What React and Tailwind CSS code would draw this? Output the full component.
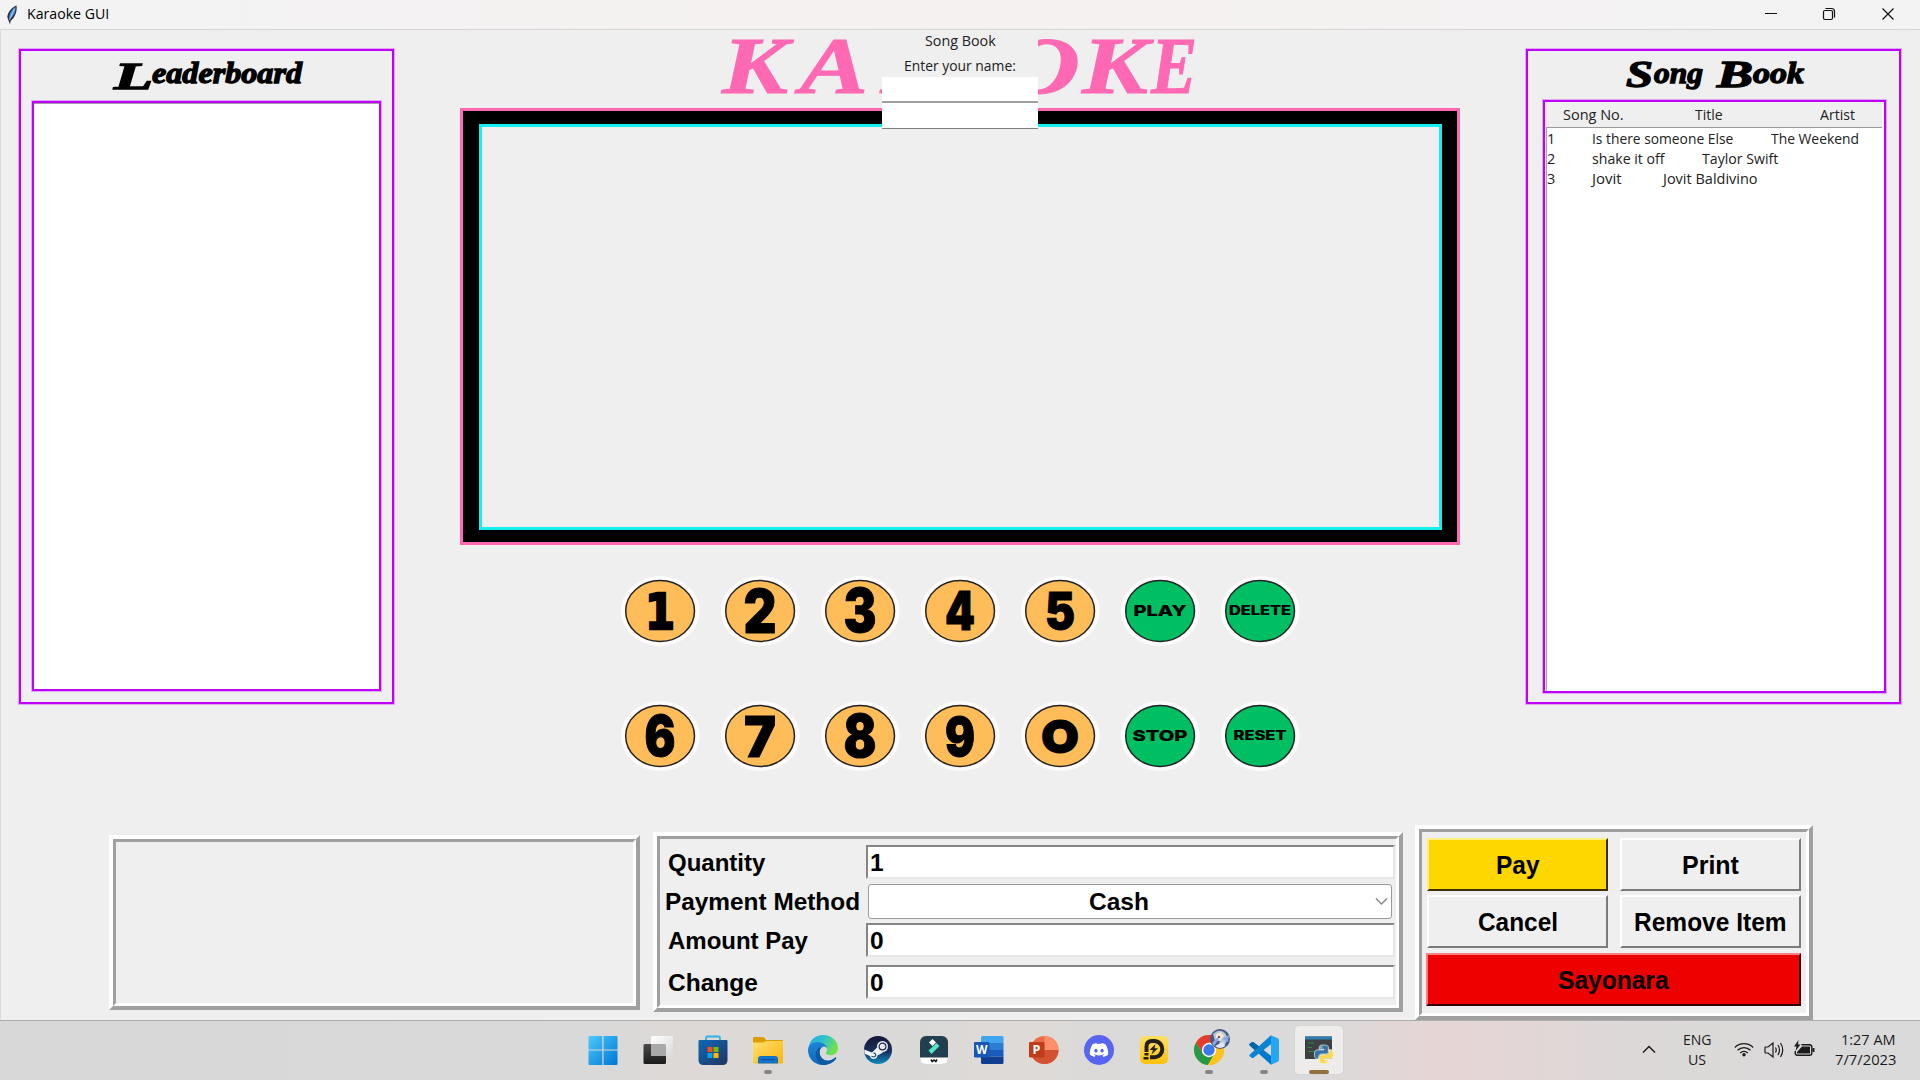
import React, { useLayoutEffect, useRef, useState } from "react";
import { FaDiscord } from "react-icons/fa";

const UI = "font-['Open_Sans','Noto_Sans',sans-serif]";
const ARIAL = "font-['Liberation_Sans',Arial,sans-serif]";

/* One line of text, condensed or widened to an exact width. */
function Fit({ w, className = "", children }) {
  const ref = useRef(null);
  const [scale, setScale] = useState(1);
  useLayoutEffect(() => {
    if (ref.current) setScale(w / ref.current.offsetWidth);
  }, [w]);
  return (
    <span className={"block whitespace-pre " + className} style={{ width: w }}>
      <span ref={ref} className="inline-block origin-left" style={{ transform: `scaleX(${scale})` }}>
        {children}
      </span>
    </span>
  );
}

function TitleBar() {
  return (
    <header className="flex h-[30px] items-center border-b border-[#d4d4d4] bg-gradient-to-r from-[#f3f3f3] via-[#f5f1f0] to-[#f3f3f3] pl-[6px]">
      <svg width="12" height="20" viewBox="0 0 12 20">
        <path d="M10.500.5C7 1.500 2 6 1.300 12l1.200 3.500L4 19.500 4.600 16C9 12.500 11.500 6 10.500.5Z" fill="#26303f" />
        <path d="M9.500 1.800C6.500 4 3.200 8 3 13l1.200.8C7.800 11 10 6.500 9.500 1.800Z" fill="#4f8fd6" />
        <path d="M8.500 3.500 3.500 15" stroke="#bcd8f5" strokeWidth=".8" />
      </svg>
      <Fit w={82} className={`${UI} ml-[9px] pb-[2px] text-[15px] leading-[27px] text-black`}>Karaoke GUI</Fit>
      <div className="ml-auto flex items-center">
        <svg width="58" height="29" viewBox="0 0 58 29"><path d="M22 13.500H34" stroke="#111" /></svg>
        <svg width="58" height="29" viewBox="0 0 58 29" fill="none" stroke="#111" strokeWidth="1.200">
          <rect x="22.500" y="10.500" width="9" height="9" rx="1.500" />
          <path d="M24.500 8.500H30.500Q33.500 8.500 33.500 11.500V17.500" />
        </svg>
        <svg width="61" height="29" viewBox="0 0 61 29"><path d="M23.500 8.500l11 11M34.500 8.500l-11 11" stroke="#111" strokeWidth="1.200" /></svg>
      </div>
    </header>
  );
}

const purple = "border-2 border-[#bf00ff] shadow-[0_0_0_1px_rgba(191,0,255,0.3)]";

function Leaderboard() {
  return (
    <section className={`ml-[19px] mt-[19px] h-[655px] w-[375px] ${purple} flex flex-col px-[11px]`}>
      <svg width="350" height="50" viewBox="32 51 350 50" className="shrink-0 font-['Liberation_Serif',serif] font-bold">
        <text y="83" fontSize="31" stroke="#000" strokeWidth="1.300">
          <tspan x="114" dy="6" fontSize="38" fontStyle="italic" textLength="39" lengthAdjust="spacingAndGlyphs">L</tspan>
          <tspan x="152" dy="-6" fontSize="30" fontStyle="italic" textLength="150" lengthAdjust="spacingAndGlyphs">eaderboard</tspan>
        </text>
      </svg>
      <div className={`h-[590px] w-[349px] ${purple} bg-white`}><div className="h-px bg-[#a0a0a0]" /></div>
    </section>
  );
}

const songs = [
  { no: "1", title: "Is there someone Else", tw: 141, gap: "ml-[38px]", artist: "The Weekend", aw: 88 },
  { no: "2", title: "shake it off", tw: 72, gap: "ml-[38px]", artist: "Taylor Swift", aw: 76 },
  { no: "3", title: "Jovit", tw: 30, gap: "ml-[41px]", artist: "Jovit Baldivino", aw: 95 },
];

function SongBook() {
  return (
    <section className={`ml-[66px] mt-[19px] h-[655px] w-[375px] ${purple} flex flex-col pl-[15px]`}>
      <svg width="344" height="49" viewBox="1543 51 344 49" className="shrink-0 font-['Liberation_Serif',serif] font-bold italic">
        <text y="83" fontSize="30" stroke="#000" strokeWidth="1.300">
          <tspan x="1626" dy="4" fontSize="37" textLength="27" lengthAdjust="spacingAndGlyphs">S</tspan>
          <tspan x="1654" dy="-4" textLength="49" lengthAdjust="spacingAndGlyphs">ong</tspan>
          <tspan> </tspan>
          <tspan x="1717" dy="4" fontSize="37" textLength="36" lengthAdjust="spacingAndGlyphs">B</tspan>
          <tspan x="1753" dy="-4" textLength="51" lengthAdjust="spacingAndGlyphs">ook</tspan>
        </text>
      </svg>
      <div className={`h-[593px] w-[343px] ${purple} ${UI} bg-white pl-[1px] text-[14.500px] leading-[20px] text-[#222]`}>
        <div className="mr-[2px] flex h-[26px] items-center border-b border-[#9a9a9a] bg-[#efefef] pl-[17px]">
          <Fit w={61}>Song No.</Fit>
          <Fit w={28} className="ml-[71px]">Title</Fit>
          <Fit w={35} className="ml-[97px]">Artist</Fit>
        </div>
        <ul className="h-[563px] border-l border-[#a8a8a8] pt-[1px]">
          {songs.map((s) => (
            <li key={s.no} className="flex h-[20px]">
              <Fit w={8}>{s.no}</Fit>
              <Fit w={s.tw} className="ml-[37px]">{s.title}</Fit>
              <Fit w={s.aw} className={s.gap}>{s.artist}</Fit>
            </li>
          ))}
        </ul>
      </div>
    </section>
  );
}

function NameDialog() {
  return (
    <div className={`absolute left-[882px] top-0 flex h-[99px] w-[156px] flex-col items-center bg-[#efefef] ${UI} text-[14.500px] text-[#222]`}>
      <Fit w={71} className="h-[24px] leading-[22px]">Song Book</Fit>
      <Fit w={112} className="mt-[1px] h-[22px] leading-[21px]">Enter your name:</Fit>
      <div className="h-[26px] w-full border-b-2 border-[#a0a0a0] bg-white" />
      <div className="h-[26px] w-full border-b border-[#808080] bg-white" />
    </div>
  );
}

const keys = [
  { t: "1", w: 30, s: 50, y: 54 },
  { t: "2", w: 33, s: 61, y: 57.5 },
  { t: "3", w: 33, s: 60, y: 57 },
  { t: "4", w: 30, s: 53, y: 55 },
  { t: "5", w: 30, s: 51, y: 54 },
  { t: "PLAY", w: 53, s: 15, y: 40.5, g: true },
  { t: "DELETE", w: 62, s: 12.5, y: 39.8, g: true },
  { t: "6", w: 31, s: 57, y: 56 },
  { t: "7", w: 32, s: 57, y: 57 },
  { t: "8", w: 33, s: 59, y: 57 },
  { t: "9", w: 30, s: 54, y: 55.5 },
  { t: "O", w: 38, s: 46, y: 52.5 },
  { t: "STOP", w: 55, s: 15, y: 41, g: true },
  { t: "RESET", w: 53, s: 12.5, y: 40, g: true },
];

function Keypad() {
  return (
    <div className="mt-[30px] grid grid-cols-[repeat(7,100px)] justify-center gap-y-[53px]">
      {keys.map((k) => (
        <button key={k.t} className="flex h-[72px] justify-center">
          <svg width="80" height="72" viewBox="0 0 80 72">
            <ellipse cx="40.300" cy="36" rx="39.500" ry="35" fill="#fdfbfb" />
            <ellipse cx="40.100" cy="36" rx="34.400" ry="30.400" fill={k.g ? "#00bf63" : "#ffbd59"} stroke="#222" strokeWidth="1.500" />
            <text
              x={40 - k.w / 2} y={k.y} fontSize={k.s} textLength={k.w} lengthAdjust="spacingAndGlyphs"
              className={k.t === "1" ? "font-['DejaVu_Sans',sans-serif] font-bold" : k.g ? "font-['Inter',sans-serif] font-extrabold" : "font-['Inter',sans-serif] font-black"}
              stroke="#000" strokeWidth={k.g ? 0.2 : k.t === "1" ? 2.5 : 1}
            >{k.t}</text>
          </svg>
        </button>
      ))}
    </div>
  );
}

const banner = [
  { c: "K", x: 722, w: 66 },
  { c: "A", x: 800, w: 68 },
  { c: "R", x: 880, w: 66 },
  { c: "A", x: 942, w: 60 },
  { c: "O", x: 1004, w: 76 },
  { c: "K", x: 1082, w: 66 },
  { c: "E", x: 1151, w: 46 },
];

function Stage() {
  return (
    <section className="ml-[66px] w-[1000px]">
      <svg width="1000" height="78" viewBox="460 30 1000 78" className="block font-['Liberation_Serif',serif] font-bold italic">
        <text y="93" fontSize="80" fill="#ff69b4" stroke="#ff69b4" strokeWidth="1">
          {banner.map((b) => (
            <tspan key={b.x} x={b.x} textLength={b.w} lengthAdjust="spacingAndGlyphs">{b.c}</tspan>
          ))}
        </text>
      </svg>
      <div className="h-[437px] border-[3px] border-[#ff69b4] bg-black pb-[12px] pl-[16px] pr-[15px] pt-[13px]">
        <div className="h-full border-[3px] border-[#14f0f0] bg-[#efefef]" />
      </div>
      <Keypad />
    </section>
  );
}

/* Tk-style ridge frame: raised outer edge, sunken inner edge. */
function Ridge({ className, inner = "", children }) {
  return (
    <section className={`border-4 border-b-[#a0a0a0] border-l-white border-r-[#a0a0a0] border-t-white ${className}`}>
      <div className={`h-full border-[3px] border-b-white border-l-[#a0a0a0] border-r-white border-t-[#a0a0a0] ${inner}`}>{children}</div>
    </section>
  );
}

function Entry({ children }) {
  return (
    <div className="h-[34px] w-[529px] border-2 border-b-[#e6e6e6] border-l-[#858585] border-r-[#e6e6e6] border-t-[#858585] bg-white pl-[2px]">
      <span className="block leading-[31px]">{children}</span>
    </div>
  );
}

function PaymentForm() {
  return (
    <Ridge className="ml-[13px] mt-[7px] h-[180px] w-[750px]" inner={`${ARIAL} pl-[5px] pt-[6px] text-[24.500px] font-bold text-black`}>
      <div className="flex h-[34px] w-[730px] justify-between pl-[3px]">
        <Fit w={97} className="leading-[35px]">Quantity</Fit>
        <Entry>1</Entry>
      </div>
      <div className="mt-[5px] flex h-[35px] w-[727px] justify-between">
        <Fit w={195} className="leading-[35px]">Payment Method</Fit>
        <div className="flex h-[35px] w-[524px] items-center justify-center rounded-[3px] border border-[#9a9a9a] bg-white pl-[56px]">
          <Fit w={60} className="ml-auto leading-[34px]">Cash</Fit>
          <svg width="13" height="9" viewBox="0 0 13 9" className="ml-[226px] mr-[3px] shrink-0"><path d="M1 1.500 6.500 7 12 1.500" fill="none" stroke="#8a8a8a" strokeWidth="1.500" /></svg>
        </div>
      </div>
      <div className="mt-[4px] flex h-[34px] w-[730px] justify-between pl-[3px]">
        <Fit w={140} className="leading-[35px]">Amount Pay</Fit>
        <Entry>0</Entry>
      </div>
      <div className="mt-[8px] flex h-[34px] w-[730px] justify-between pl-[3px]">
        <Fit w={90} className="leading-[35px]">Change</Fit>
        <Entry>0</Entry>
      </div>
    </Ridge>
  );
}

function Btn({ w, tone, className = "", children }) {
  const tones = {
    plain: "bg-[#efefef] border-t-white border-l-white border-r-[#7b7b7b] border-b-[#7b7b7b]",
    gold: "bg-[#ffd700] border-t-[#ffee80] border-l-[#ffee80] border-r-[#3a3100] border-b-[#3a3100]",
    red: "bg-[#ee0000] border-t-[#f88080] border-l-[#f88080] border-r-[#360000] border-b-[#360000]",
  };
  return (
    <button className={`flex h-[53px] items-center justify-center border-2 ${tones[tone]} ${className}`}>
      <Fit w={w} className="pr-[1px] text-left leading-[50px]">{children}</Fit>
    </button>
  );
}

function Actions() {
  return (
    <Ridge className="ml-[12px] h-[195px] w-[398px]" inner={`${ARIAL} pl-[4px] pt-[6px] text-[25px] font-bold text-black`}>
      <div className="grid w-[376px] grid-cols-[181px_181px] gap-x-[12px] gap-y-[4px] pl-[1px]">
        <Btn tone="gold" w={43}>Pay</Btn>
        <Btn tone="plain" w={57}>Print</Btn>
        <Btn tone="plain" w={80}>Cancel</Btn>
        <Btn tone="plain" w={153}>Remove Item</Btn>
      </div>
      <Btn tone="red" w={111} className="mt-[5px] w-[375px]">Sayonara</Btn>
    </Ridge>
  );
}

function WindowsIcon() {
  return (
    <svg width="30" height="30" viewBox="0 0 30 30">
      <defs><linearGradient id="win" gradientUnits="userSpaceOnUse" x1="1" y1="1" x2="29" y2="29"><stop stopColor="#4cc9fb" /><stop offset="1" stopColor="#0078d4" /></linearGradient></defs>
      <path fill="url(#win)" d="M0.500 2Q0.500 1 1.500 1H14.300V14.500H0.500ZM15.500 1H28.500Q29.500 1 29.500 2V14.500H15.500ZM0.500 15.500H14.300V30H1.500Q0.500 30 0.500 29ZM15.500 15.500H29.500V29Q29.500 30 28.500 30H15.500Z" />
    </svg>
  );
}

function TaskViewIcon() {
  return (
    <svg width="31" height="30" viewBox="0 0 31 30">
      <defs>
        <linearGradient id="tv" x2="1" y2="1"><stop stopColor="#fff" /><stop offset="1" stopColor="#d9d9d9" /></linearGradient>
        <linearGradient id="tvd" x2="0" y2="1"><stop stopColor="#4a4a4a" /><stop offset="1" stopColor="#1b1b1b" /></linearGradient>
      </defs>
      <rect x="0.500" y="9" width="22.500" height="20" rx="1.500" fill="url(#tvd)" />
      <rect x="8" y="1" width="22" height="20" rx="1.500" fill="url(#tv)" />
      <path d="M8 9H21.500Q23 9 23 10.500V21H9.500Q8 21 8 19.500Z" fill="#a9a9a9" />
    </svg>
  );
}

function StoreIcon() {
  return (
    <svg width="30" height="30" viewBox="0 0 30 30">
      <defs><linearGradient id="st" x2="1" y2="1"><stop stopColor="#0f69b8" /><stop offset="1" stopColor="#1f3560" /></linearGradient></defs>
      <path d="M8 6V3Q8 1.500 9.500 1.500H20.500Q22 1.500 22 3V6" fill="none" stroke="#2bb3ee" strokeWidth="1.800" />
      <path d="M.5 6Q.5 5 1.500 5H28.500Q29.500 5 29.500 6V25Q29.500 30 24.500 30H5.500Q.5 30 .5 25Z" fill="url(#st)" />
      <path d="M9.500 12h5v5h-5z" fill="#f25022" /><path d="M15.500 12h5v5h-5z" fill="#7fba00" />
      <path d="M9.500 18h5v5h-5z" fill="#00a4ef" /><path d="M15.500 18h5v5h-5z" fill="#ffb900" />
    </svg>
  );
}

function ExplorerIcon() {
  return (
    <svg width="30" height="30" viewBox="0 0 30 30">
      <defs><linearGradient id="ex" x2="1" y2="1"><stop stopColor="#ffe072" /><stop offset="1" stopColor="#fbb40b" /></linearGradient></defs>
      <path d="M0 3.500Q0 2 1.500 2H9.500Q11 2 12 3.500L13 5H29Q30 5 30 6V12H0Z" fill="#dd9b04" />
      <path d="M0 7.500H10.500L13 6H30V28.500H0Z" fill="url(#ex)" />
      <path d="M5 28.500V24Q5 21 8 21H22Q25 21 25 24V28.500Z" fill="#1272c8" />
      <path d="M8.500 24.700H21.500" stroke="#0b4c91" />
    </svg>
  );
}

function EdgeIcon() {
  return (
    <svg width="30" height="30" viewBox="0 0 30 30">
      <defs>
        <linearGradient id="eg" x1="0" y1="0" x2="1" y2=".45"><stop stopColor="#2aa9e0" /><stop offset=".5" stopColor="#2cc3cf" /><stop offset="1" stopColor="#6fe14c" /></linearGradient>
        <linearGradient id="eb" x2="0" y2="1"><stop stopColor="#1b84d8" /><stop offset="1" stopColor="#1167b8" /></linearGradient>
      </defs>
      <path d="M.5 13C1.500 5 7.500 0 15 0 24 0 30 6.500 30 13c0 4.500-3 7.200-7 7.200-3.500 0-5-1.200-5-2.300 0-.8 1.200-1.500 1.200-3.700C19.200 10.500 15.500 7.500 11 7.500 5.500 7.500 1.500 10.500.5 13Z" fill="url(#eg)" />
      <path d="M0 15C0 10 4.500 7 9.500 7c5.500 0 9.500 3 9.700 7-1-2.200-3-2.700-4.200-2.200-2.500 1-3.800 3.500-3.400 6.200C12.300 23.500 17 26.500 21.500 25.500c2.500-.5 4.500-1.800 5.700-2.700.7-.5 1.300 0 .9.800C25.500 27.500 20.500 30 15 30 6.500 30 0 23.500 0 15Z" fill="url(#eb)" />
      <path d="M11.500 12.500C6 16 6.500 26.500 14.500 30 20 30.300 25.500 27.500 28.100 23.600c.4-.8-.2-1.300-.9-.8-1.200.9-3.200 2.200-5.700 2.700C17 26.500 12.300 23.500 11.600 18c-.2-2 .4-4 1.700-5.300Z" fill="#0c59a4" />
    </svg>
  );
}

function SteamIcon() {
  return (
    <svg width="30" height="30" viewBox="0 0 30 30">
      <defs><linearGradient id="sm" x2="0" y2="1"><stop stopColor="#171536" /><stop offset=".55" stopColor="#15305f" /><stop offset="1" stopColor="#1089bd" /></linearGradient></defs>
      <circle cx="15" cy="15" r="14" fill="url(#sm)" />
      <path d="M1.200 14.500 9 17.500 14 12.500 20 17.500 14.500 20.500Q14 24 10.500 24 7.500 23.800 7 21L1.600 18.800Z" fill="#f3f3f3" />
      <path d="M8.500 21.300 10.500 22Q12.800 22 12.800 19.800 12.500 18 10.500 17.900" fill="none" stroke="#174a7c" strokeWidth="1.100" />
      <circle cx="19.500" cy="11.500" r="5.500" fill="#f3f3f3" />
      <circle cx="19.500" cy="11.500" r="3.400" fill="#e8eaf0" stroke="#19264e" strokeWidth="1.200" />
    </svg>
  );
}

function FilmoraIcon() {
  return (
    <svg width="30" height="30" viewBox="0 0 30 30">
      <rect x="1" y="1" width="28" height="28" rx="6" fill="#213f4f" />
      <path d="M1 22.500H29V23Q29 29 23 29H7Q1 29 1 23Z" fill="#fff" />
      <path d="M10 7.500 13.500 4 17 7.500 13.500 11Z" fill="#fff" />
      <path d="M9.500 15.500 17.500 8 20.500 11 12.500 19Z" fill="#55e5c5" />
      <path d="M12 24.500 13.200 26.500 15 25 16.800 26.500 18 24.500" stroke="#111" strokeWidth="1.500" fill="none" />
    </svg>
  );
}

function WordIcon() {
  return (
    <svg width="30" height="30" viewBox="0 0 30 30" className="font-['Open_Sans',sans-serif] font-bold">
      <path d="M7 2.500Q7 1 8.500 1H28Q29.500 1 29.500 2.500V8H7Z" fill="#41a5ee" /><path d="M7 8H29.500V15H7Z" fill="#2b7cd3" />
      <path d="M7 15H29.500V21.500H7Z" fill="#185abd" /><path d="M7 21.500H29.500V27.500Q29.500 29 28 29H8.500Q7 29 7 27.500Z" fill="#103f91" />
      <rect x="0" y="7" width="15.500" height="15.500" rx="1.300" fill="#1656b5" />
      <text x="2" y="19" fontSize="12" textLength="11.500" lengthAdjust="spacingAndGlyphs" fill="#fff">W</text>
    </svg>
  );
}

function PowerPointIcon() {
  return (
    <svg width="30" height="30" viewBox="0 0 30 30" className="font-['Open_Sans',sans-serif] font-bold">
      <circle cx="15.500" cy="15" r="14" fill="#ed6c47" />
      <path d="M15.500 1A14 14 0 0 1 29.500 15H15.500Z" fill="#ff8f6b" />
      <path d="M1.500 15H29.500A14 14 0 0 1 1.500 15Z" fill="#d35230" />
      <rect x="0" y="7" width="15.500" height="15.500" rx="1.300" fill="#c13b1b" />
      <text x="3.500" y="19" fontSize="12.500" fill="#fff">P</text>
    </svg>
  );
}

function DiscordIcon() {
  return (
    <span className="flex size-[30px] items-center justify-center rounded-full bg-[#5865f2]">
      <FaDiscord className="size-[20px] text-white" />
    </span>
  );
}

function LDPlayerIcon() {
  return (
    <svg width="30" height="30" viewBox="0 0 30 30">
      <defs><linearGradient id="ld" x2="0" y2="1"><stop stopColor="#ffdf62" /><stop offset="1" stopColor="#ffc20e" /></linearGradient></defs>
      <rect x="1" y="1" width="28" height="28" rx="5" fill="url(#ld)" />
      <path d="M7.500 17V11.500Q7.500 6 13 6H16A8.200 8.200 0 0 1 16 22.300H11" fill="none" stroke="#222018" strokeWidth="4" />
      <path d="M5.500 18H9.500V20.500H5.500ZM4.500 22H9.500V24.500H4.500Z" fill="#222018" />
      <path d="M16.500 9 10.500 15H14L12.500 19.500 19 13.200H15.500Z" fill="#222018" />
    </svg>
  );
}

function ChromeIcon() {
  return (
    <span className="relative block size-[30px]">
      <svg width="30" height="30" viewBox="0 0 30 30">
        <circle cx="15" cy="15" r="15" fill="#fcc31e" />
        <path d="M15 15 9 18.500 2 7.500A15 15 0 0 1 28 7.500H15Z" fill="#e33b2e" />
        <path d="M2 7.500 9 18.500 15 22 20.500 18.500 14 30A15 15 0 0 1 2 7.500Z" fill="#279847" />
        <path d="M15 8H28.300A15 15 0 0 1 14 30L21 18.500Z" fill="#fcc31e" />
        <circle cx="15" cy="15" r="7.200" fill="#fff" /><circle cx="15" cy="15" r="5.700" fill="#3b78e8" />
      </svg>
      <svg width="20" height="20" viewBox="0 0 20 20" className="absolute -top-[6px] left-[16px]">
        <circle cx="10" cy="10" r="10" fill="#46597f" />
        <path d="M3 5Q9-1 15 4L18 9 14 18H8L10 12 5 12Z" fill="#b7c4dc" />
        <path d="M6 5 11 3 14 7 10 12 6 9Z" fill="#f3e3cb" />
        <path d="M2 14 8 8 9 10 4 17ZM12 10 19 6 18 13Z" fill="#8da8db" />
        <path d="M5 17 13 13 15 17Q10 21 5 17Z" fill="#e3e7f2" /><circle cx="9" cy="8" r="1" fill="#2d3454" />
      </svg>
    </span>
  );
}

function VSCodeIcon() {
  return (
    <svg width="30" height="30" viewBox="0 0 30 30">
      <path d="M1 8.500 2.800 7.200Q3.700 6.700 4.500 7.300L22 20.800V29.700L.8 10.600Q-.2 9.500 1 8.500Z" fill="#0179cb" />
      <path d="M1 21.500 2.800 22.800Q3.700 23.300 4.500 22.700L22 9.200V.3L.8 19.400Q-.2 20.500 1 21.500Z" fill="#0b83d3" />
      <path d="M22 .2 28.800 3.200Q30 3.800 30 5V25Q30 26.200 28.800 26.800L22 29.800Z" fill="#24a6f2" />
      <path d="M1 8.500 2.800 7.200Q3.700 6.700 4.500 7.300L10.200 11.600 5.700 15.100.8 10.600Q-.2 9.500 1 8.500Z" fill="#0065a9" />
    </svg>
  );
}

const snake =
  "M14.250.18l.9.2.73.26.59.3.45.32.34.34.25.34.16.33.1.3.04.26.02.2-.01.13V8.500l-.05.63-.13.55-.21.46-.26.38-.3.31-.33.25-.35.19-.35.14-.33.1-.3.07-.26.04-.21.02H8.770l-.69.05-.59.14-.5.22-.41.27-.33.32-.27.35-.2.36-.15.37-.1.35-.07.32-.04.27-.02.21v3.060H3.170l-.21-.03-.28-.07-.32-.12-.35-.18-.36-.26-.36-.36-.35-.46-.32-.59-.28-.73-.21-.88-.14-1.050-.05-1.230.06-1.220.16-1.040.24-.87.32-.71.36-.57.4-.44.42-.33.42-.24.4-.16.36-.1.32-.05.24-.01h.16l.06.01h8.160v-.83H6.180l-.01-2.750-.02-.37.05-.34.11-.31.17-.28.25-.26.31-.23.38-.2.44-.18.51-.15.58-.12.64-.1.71-.06.77-.04.84-.02 1.270.05zm-6.300 1.980l-.23.33-.08.41.08.41.23.34.33.22.41.09.41-.09.33-.22.23-.34.08-.41-.08-.41-.23-.33-.33-.22-.41-.09-.41.09z";

function PythonIcon() {
  return (
    <svg width="30" height="30" viewBox="0 0 30 30">
      <path d="M1 1.500H28V24H1Z" fill="#3d4143" /><path d="M1 1.500H28V4.500H1Z" fill="#2f7fae" />
      <path d="M4 8H10M3.500 12.500H8M4 16.500H13" stroke="#2f8a3a" strokeWidth="1.200" />
      <g transform="translate(10.500 10) scale(.78)">
        <path d={snake} fill="#3672a4" stroke="#f1f1f1" strokeWidth="1" />
        <path d={snake} fill="#ffd94c" stroke="#f1f1f1" strokeWidth="1" transform="rotate(180 12 12)" />
      </g>
    </svg>
  );
}

const apps = [
  { I: WindowsIcon }, { I: TaskViewIcon }, { I: StoreIcon }, { I: ExplorerIcon, run: true }, { I: EdgeIcon },
  { I: SteamIcon }, { I: FilmoraIcon }, { I: WordIcon }, { I: PowerPointIcon }, { I: DiscordIcon },
  { I: LDPlayerIcon }, { I: ChromeIcon, run: true }, { I: VSCodeIcon, run: true }, { I: PythonIcon, active: true },
];

function Taskbar() {
  return (
    <footer className={`flex h-[60px] border-t border-[#adadad] bg-[linear-gradient(90deg,#d8d8d8_0%,#d9d9d9_31%,#ded9d6_36%,#d9d9d9_44%,#dedad7_53%,#dadada_60%,#dadada_68%,#e6d5d5_75%,#dcd8d8_86%,#dadada_100%)] pl-[579px] ${UI} text-[#1c1c1c]`}>
      <nav className="mt-[5px] flex gap-[7.100px]">
        {apps.map(({ I, run, active }, i) => (
          <div key={i} className={active ? "flex h-[48px] w-[48px] flex-col items-center rounded-[4px] bg-[#eeebeb] pt-[9px] shadow-[0_0_1px_#bbb]" : "flex h-[48px] w-[48px] flex-col items-center pt-[9px]"}>
            <I />
            {run && <span className="mt-[5px] h-[4px] w-[8px] rounded-full bg-[#858585]" />}
            {active && <span className="mt-[5px] h-[4px] w-[20px] rounded-full bg-[#93713f]" />}
          </div>
        ))}
      </nav>
      <div className="ml-auto flex pr-[24px] text-[15px]">
        <svg width="14" height="9" viewBox="0 0 14 9" className="mt-[24px]"><path d="M1 7.500 7 1.500 13 7.500" fill="none" stroke="#1c1c1c" strokeWidth="1.500" /></svg>
        <div className="ml-[26px] mt-[8px] flex w-[30px] flex-col items-center leading-[20px]">
          <Fit w={29}>ENG</Fit>
          <Fit w={18}>US</Fit>
        </div>
        <svg width="20" height="15" viewBox="0 0 20 15" className="ml-[22px] mt-[21px]" fill="none" stroke="#1c1c1c" strokeWidth="1.300">
          <path d="M.8 5.500A13 13 0 0 1 19.200 5.500M3.500 8.300A9.200 9.200 0 0 1 16.500 8.300M6.200 11A5.400 5.400 0 0 1 13.800 11" /><circle cx="10" cy="12.800" r="1.700" fill="#1c1c1c" stroke="none" />
        </svg>
        <svg width="21" height="18" viewBox="0 0 21 18" className="ml-[10px] mt-[20px]" fill="none" stroke="#1c1c1c" strokeWidth="1.200">
          <path d="M1 6.500Q1 6 1.500 6H4L9 2V16L4 12H1.500Q1 12 1 11.500ZM11.500 6.500Q13 9 11.500 11.500M14 4Q17 9 14 14M16.500 2Q21 9 16.500 16" />
        </svg>
        <svg width="21" height="18" viewBox="0 0 21 18" className="ml-[9px] mt-[19px]">
          <path d="M7.500 4.700H15.500Q17.800 4.700 17.800 7V13Q17.800 15.300 15.500 15.300H3.500Q1.200 15.300 1.200 13V11" fill="none" stroke="#1c1c1c" strokeWidth="1.400" />
          <path d="M8 6.500H16V13.500H3V12Z" fill="#1c1c1c" /><path d="M18.500 8H20.500V12H18.500Z" fill="#1c1c1c" />
          <path d="M4.500 0 0 6.500H2.500L1.500 11 6.500 4.500H4Z" fill="#1c1c1c" />
        </svg>
        <div className="ml-[19px] mt-[8px] flex w-[62px] flex-col items-end leading-[20px]">
          <Fit w={55}>1:27 AM</Fit>
          <Fit w={61}>7/7/2023</Fit>
        </div>
      </div>
    </footer>
  );
}

export default function App() {
  return (
    <div className="flex h-[1080px] w-[1920px] flex-col overflow-hidden bg-[#efefef]">
      <TitleBar />
      <main className="h-[990px] border-l border-[#dcdcdc]">
        <div className="relative -ml-px flex h-[795px] items-start">
          <Leaderboard />
          <Stage />
          <SongBook />
          <NameDialog />
        </div>
        <div className="-ml-px flex items-start pl-[109px]">
          <Ridge className="mt-[10px] h-[175px] w-[531px]" />
          <PaymentForm />
          <Actions />
        </div>
      </main>
      <Taskbar />
    </div>
  );
}
